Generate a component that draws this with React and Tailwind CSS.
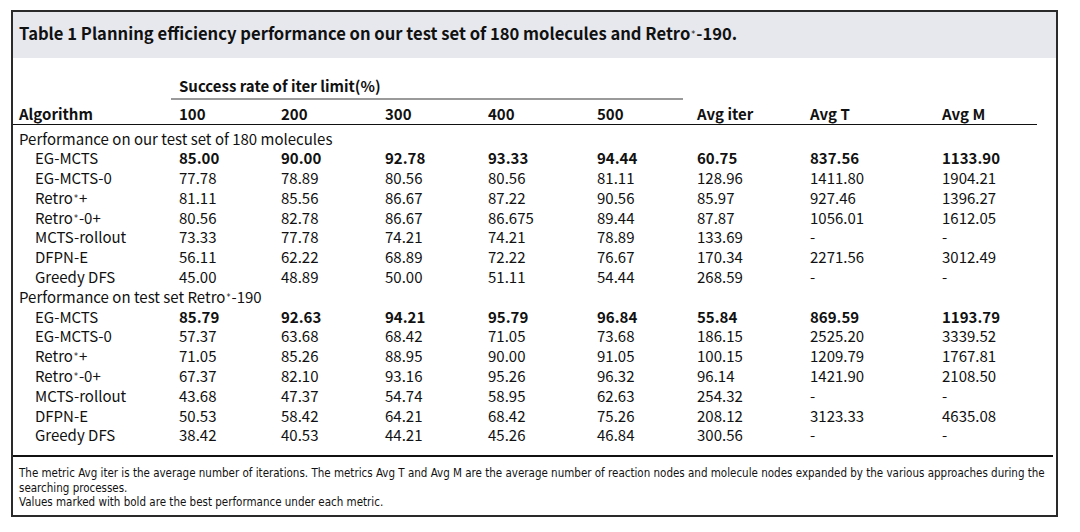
const cols =
  "grid grid-cols-[160px_102px_104px_103px_109px_100px_113px_132px_1fr]";

const Star = () => (
  <sup className="font-['DejaVu_Sans',sans-serif] font-normal text-[8px] relative -top-[3px] ml-[1px] mr-[1px]">*</sup>
);

const sections = [
  {
    title: <>Performance on our test set of 180 molecules</>,
    rows: [
      { name: "EG-MCTS", v: ["85.00", "90.00", "92.78", "93.33", "94.44", "60.75", "837.56", "1133.90"], bold: true },
      { name: "EG-MCTS-0", v: ["77.78", "78.89", "80.56", "80.56", "81.11", "128.96", "1411.80", "1904.21"] },
      { name: <>Retro<Star />+</>, v: ["81.11", "85.56", "86.67", "87.22", "90.56", "85.97", "927.46", "1396.27"] },
      { name: <>Retro<Star />-0+</>, v: ["80.56", "82.78", "86.67", "86.675", "89.44", "87.87", "1056.01", "1612.05"] },
      { name: "MCTS-rollout", v: ["73.33", "77.78", "74.21", "74.21", "78.89", "133.69", "-", "-"] },
      { name: "DFPN-E", v: ["56.11", "62.22", "68.89", "72.22", "76.67", "170.34", "2271.56", "3012.49"] },
      { name: "Greedy DFS", v: ["45.00", "48.89", "50.00", "51.11", "54.44", "268.59", "-", "-"] },
    ],
  },
  {
    title: <>Performance on test set Retro<Star />-190</>,
    rows: [
      { name: "EG-MCTS", v: ["85.79", "92.63", "94.21", "95.79", "96.84", "55.84", "869.59", "1193.79"], bold: true },
      { name: "EG-MCTS-0", v: ["57.37", "63.68", "68.42", "71.05", "73.68", "186.15", "2525.20", "3339.52"] },
      { name: <>Retro<Star />+</>, v: ["71.05", "85.26", "88.95", "90.00", "91.05", "100.15", "1209.79", "1767.81"] },
      { name: <>Retro<Star />-0+</>, v: ["67.37", "82.10", "93.16", "95.26", "96.32", "96.14", "1421.90", "2108.50"] },
      { name: "MCTS-rollout", v: ["43.68", "47.37", "54.74", "58.95", "62.63", "254.32", "-", "-"] },
      { name: "DFPN-E", v: ["50.53", "58.42", "64.21", "68.42", "75.26", "208.12", "3123.33", "4635.08"] },
      { name: "Greedy DFS", v: ["38.42", "40.53", "44.21", "45.26", "46.84", "300.56", "-", "-"] },
    ],
  },
];

const heads = ["100", "200", "300", "400", "500", "Avg iter", "Avg T", "Avg M"];

export default function App() {
  return (
    <div className="w-[1080px] h-[532px] bg-white pl-[11px] pt-[10px] font-['Noto_Sans_CJK_KR','Noto_Sans',sans-serif] text-[#111]">
      <div className="w-[1047px] h-[507px] border-2 border-[#2a2a2a] flex flex-col">
        <div className="h-[46px] bg-[#e6e8ee] pt-[11px] pl-[6px] text-[16.6px] font-bold leading-[20px]">
          Table 1 Planning efficiency performance on our test set of 180
          molecules and Retro<Star />-190.
        </div>

        <div className="pl-[6px] mt-[18px] text-[15px] font-bold leading-[20px]">
          <div className={cols}>
            <div />
            <div className="col-span-5">Success rate of iter limit(%)</div>
          </div>
        </div>
        <div className="ml-[158px] w-[512px] h-[1.5px] bg-[#9a9a9a] mt-[2px]" />
        <div className={`${cols} pl-[6px] mt-[4px] text-[15px] font-bold leading-[20px]`}>
          <div>Algorithm</div>
          {heads.map((h) => (
            <div key={h}>{h}</div>
          ))}
        </div>
        <div className="mr-[19px] h-[1.5px] bg-[#111]" />

        <div className="mt-[3.5px] pl-[6px] text-[15px] leading-[19.8px]">
          {sections.map((s, i) => (
            <div key={i}>
              <div>{s.title}</div>
              {s.rows.map((r, j) => (
                <div key={j} className={cols}>
                  <div className="pl-[16px]">{r.name}</div>
                  {r.v.map((x, k) => (
                    <div key={k} className={r.bold ? "font-bold" : ""}>
                      {x}
                    </div>
                  ))}
                </div>
              ))}
            </div>
          ))}
        </div>

        <div className="mt-[10px] mr-[3px] h-[2px] bg-[#111]" />
        <div className="mt-[9px] pl-[6px] pr-[4px] text-[11.5px] leading-[14.5px] font-['Liberation_Sans_Narrow','DejaVu_Sans_Condensed','Noto_Sans_CJK_KR',sans-serif]">
          <p>
            The metric Avg iter is the average number of iterations. The
            metrics Avg T and Avg M are the average number of reaction nodes
            and molecule nodes expanded by the various approaches during the
            searching processes.
          </p>
          <p>Values marked with bold are the best performance under each metric.</p>
        </div>
      </div>
    </div>
  );
}
